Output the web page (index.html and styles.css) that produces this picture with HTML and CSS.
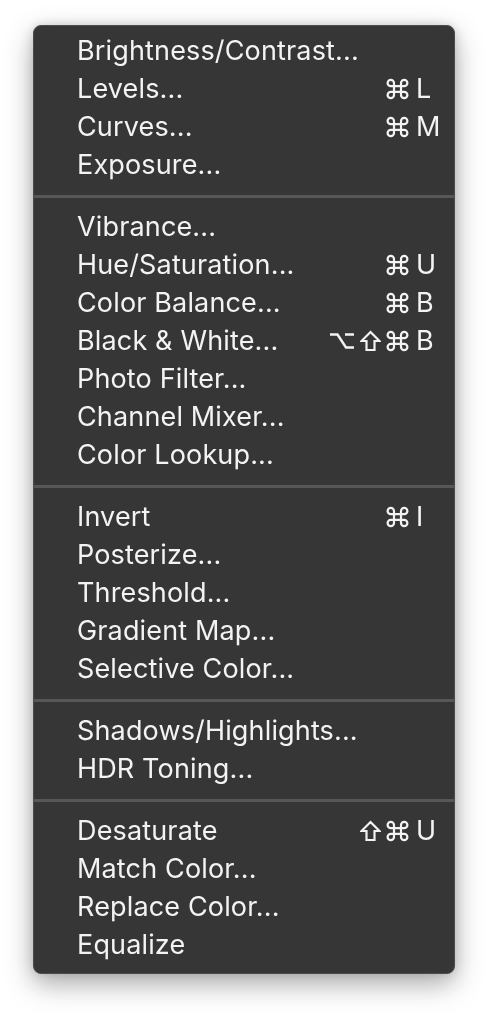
FILE: index.html
```html
<!DOCTYPE html>
<html>
<head>
<meta charset="utf-8">
<link rel="stylesheet" href="styles.css">
</head>
<body>
<svg class="defs" width="0" height="0" aria-hidden="true">
  <defs>
    <symbol id="cmd" viewBox="0 0 23 22">
      <path d="M8 7.5 V5 A3.2 3.2 0 1 0 4.8 8.2 H18.2 A3.2 3.2 0 1 0 15 5 V17 A3.2 3.2 0 1 0 18.2 13.8 H4.8 A3.2 3.2 0 1 0 8 17 Z" fill="none" stroke="currentColor" stroke-width="2.2" stroke-linejoin="round"/>
    </symbol>
    <symbol id="shift" viewBox="0 0 21 22">
      <path d="M10.5 2 L19.5 11 H14.5 V20 H6.5 V11 H1.5 Z" fill="none" stroke="currentColor" stroke-width="2.2" stroke-linejoin="miter"/>
    </symbol>
    <symbol id="opt" viewBox="0 0 26 22">
      <path d="M1 4.5 H8.5 L17 17.5 H25 M16 4.5 H25" fill="none" stroke="currentColor" stroke-width="2.4"/>
    </symbol>
  </defs>
</svg>
<div class="stage">
<div class="menu">
  <div class="item"><span class="label">Brightness/Contrast...</span></div>
  <div class="item"><span class="label">Levels...</span><span class="mods"><svg class="ic ic-cmd"><use href="#cmd"/></svg></span><span class="key">L</span></div>
  <div class="item"><span class="label">Curves...</span><span class="mods"><svg class="ic ic-cmd"><use href="#cmd"/></svg></span><span class="key">M</span></div>
  <div class="item"><span class="label">Exposure...</span></div>
  <div class="sep"></div>
  <div class="item"><span class="label">Vibrance...</span></div>
  <div class="item"><span class="label">Hue/Saturation...</span><span class="mods"><svg class="ic ic-cmd"><use href="#cmd"/></svg></span><span class="key">U</span></div>
  <div class="item"><span class="label">Color Balance...</span><span class="mods"><svg class="ic ic-cmd"><use href="#cmd"/></svg></span><span class="key">B</span></div>
  <div class="item"><span class="label">Black &amp; White...</span><span class="mods"><svg class="ic ic-opt"><use href="#opt"/></svg><svg class="ic ic-shift"><use href="#shift"/></svg><svg class="ic ic-cmd"><use href="#cmd"/></svg></span><span class="key">B</span></div>
  <div class="item"><span class="label">Photo Filter...</span></div>
  <div class="item"><span class="label">Channel Mixer...</span></div>
  <div class="item"><span class="label">Color Lookup...</span></div>
  <div class="sep"></div>
  <div class="item"><span class="label">Invert</span><span class="mods"><svg class="ic ic-cmd"><use href="#cmd"/></svg></span><span class="key">I</span></div>
  <div class="item"><span class="label">Posterize...</span></div>
  <div class="item"><span class="label">Threshold...</span></div>
  <div class="item"><span class="label">Gradient Map...</span></div>
  <div class="item"><span class="label">Selective Color...</span></div>
  <div class="sep"></div>
  <div class="item"><span class="label">Shadows/Highlights...</span></div>
  <div class="item"><span class="label">HDR Toning...</span></div>
  <div class="sep"></div>
  <div class="item"><span class="label">Desaturate</span><span class="mods"><svg class="ic ic-shift"><use href="#shift"/></svg><svg class="ic ic-cmd"><use href="#cmd"/></svg></span><span class="key">U</span></div>
  <div class="item"><span class="label">Match Color...</span></div>
  <div class="item"><span class="label">Replace Color...</span></div>
  <div class="item"><span class="label">Equalize</span></div>
</div>
</div>
</body>
</html>
```
FILE: styles.css
```css
html, body {
  margin: 0;
  padding: 0;
  background: #ffffff;
}
body {
  font-family: Inter, "Liberation Sans", sans-serif;
}
.defs {
  position: absolute;
  width: 0;
  height: 0;
}
.stage {
  width: 488px;
  height: 1016px;
  box-sizing: border-box;
  padding: 25px 0 0 33px;
  background: #ffffff;
}
.menu {
  width: 420px;
  background: #363636;
  border: 1px solid #4c4c4c;
  border-radius: 8px;
  padding: 6px 0 9px 0;
  filter: drop-shadow(0 10px 14px rgba(0, 0, 0, 0.3)) drop-shadow(0 0 5px rgba(0, 0, 0, 0.15));
  color: #f3f3f3;
}
.item {
  display: grid;
  grid-template-columns: 1fr auto 38px;
  column-gap: 7px;
  align-items: center;
  height: 38px;
  padding-left: 43px;
  font-size: 27px;
  letter-spacing: 0.15px;
  line-height: 38px;
  white-space: nowrap;
}
.label {
  grid-column: 1;
}
.mods {
  grid-column: 2;
  display: flex;
  justify-content: flex-end;
  align-items: center;
  gap: 5px;
}
.ic {
  display: block;
  height: 22px;
  color: #f3f3f3;
}
.ic-cmd {
  width: 23px;
}
.ic-shift {
  width: 21px;
}
.ic-opt {
  width: 26px;
}
.key {
  grid-column: 3;
}
.sep {
  height: 3px;
  background: #575757;
  margin: 11px 0 10px 0;
}
```
